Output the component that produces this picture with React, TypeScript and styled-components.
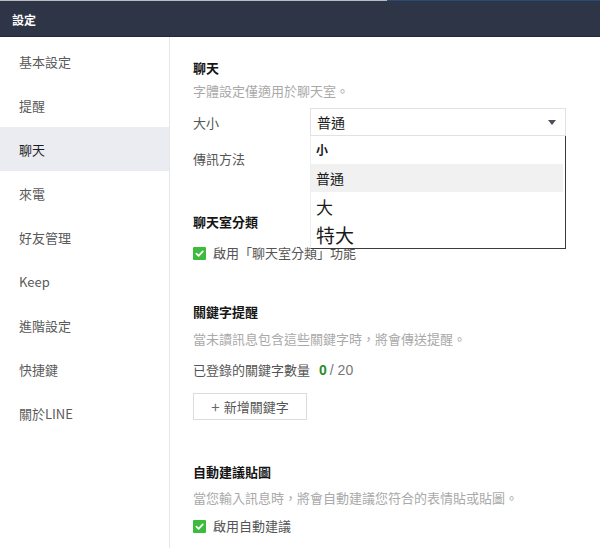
import React from 'react';
import styled, { createGlobalStyle } from 'styled-components';

const GlobalStyle = createGlobalStyle`
    html, body {
        margin: 0;
        padding: 0;
        background: #ffffff;
        font-family: 'Noto Sans CJK TC', 'Noto Sans', 'Liberation Sans', sans-serif;
    }
`;

const menuItems = ['基本設定', '提醒', '聊天', '來電', '好友管理', 'Keep', '進階設定', '快捷鍵', '關於LINE'];

const sizeOptions = [
    { label: '小', size: 12, active: false },
    { label: '普通', size: 14, active: true },
    { label: '大', size: 17, active: false },
    { label: '特大', size: 19, active: false },
];

const Check = () => (
    <CheckBox>
        <svg width="9" height="9" viewBox="0 0 10 10">
            <path d="M1.5 5.2 L4 7.6 L8.6 2.6" fill="none" stroke="#fff" strokeWidth="1.9" strokeLinecap="round" strokeLinejoin="round" />
        </svg>
    </CheckBox>
);

const App = () => {
    return (
        <Page>
            <GlobalStyle />
            <TopEdge>
                <EdgeGray />
                <EdgeBlue />
            </TopEdge>
            <Header>設定</Header>
            <Body>
                <Sidebar>
                    {menuItems.map((item) => (
                        <MenuItem key={item} $active={item === '聊天'}>
                            {item}
                        </MenuItem>
                    ))}
                </Sidebar>

                <Content>
                    <Heading $top={0}>聊天</Heading>
                    <Desc $top={3}>字體設定僅適用於聊天室。</Desc>
                    <FieldRow $top={7}>
                        <FieldLabel>大小</FieldLabel>
                        <SelectWrap>
                            <SelectBox>
                                普通
                                <Arrow />
                            </SelectBox>
                            <OptionList>
                                {sizeOptions.map((o) => (
                                    <OptionItem key={o.label} $active={o.active} $size={o.size}>
                                        {o.label}
                                    </OptionItem>
                                ))}
                            </OptionList>
                        </SelectWrap>
                    </FieldRow>
                    <FieldRow $top={8}>
                        <FieldLabel>傳訊方法</FieldLabel>
                    </FieldRow>

                    <Heading $top={40}>聊天室分類</Heading>
                    <CheckRow $top={13}>
                        <Check />
                        啟用「聊天室分類」功能
                    </CheckRow>

                    <Heading $top={41}>關鍵字提醒</Heading>
                    <Desc $top={7}>當未讀訊息包含這些關鍵字時，將會傳送提醒。</Desc>
                    <CountRow>
                        已登錄的關鍵字數量
                        <CountNum>0</CountNum>
                        <CountTotal>/ 20</CountTotal>
                    </CountRow>
                    <AddButton>
                        <Plus>+</Plus>新增關鍵字
                    </AddButton>

                    <Heading $top={42}>自動建議貼圖</Heading>
                    <Desc $top={6}>當您輸入訊息時，將會自動建議您符合的表情貼或貼圖。</Desc>
                    <CheckRow $top={10}>
                        <Check />
                        啟用自動建議
                    </CheckRow>
                </Content>
            </Body>
        </Page>
    );
};

export default App;

const Page = styled.div`
    width: 600px;
    height: 548px;
    overflow: hidden;
    display: flex;
    flex-direction: column;
`;

const TopEdge = styled.div`
    display: flex;
    height: 1px;
`;

const EdgeGray = styled.div`
    width: 387px;
    background: #b9bcc2;
`;

const EdgeBlue = styled.div`
    flex: 1;
    background: #2b4a78;
`;

const Header = styled.div`
    height: 36px;
    box-sizing: border-box;
    background: #2e3547;
    border-bottom: 1px solid #232939;
    color: #ffffff;
    font-size: 12px;
    font-weight: 700;
    display: flex;
    align-items: center;
    padding: 1px 0 0 12px;
`;

const Body = styled.div`
    flex: 1;
    display: flex;
`;

const Sidebar = styled.div`
    width: 169px;
    border-right: 1px solid #e6e7ea;
    padding-top: 2px;
    display: flex;
    flex-direction: column;
`;

const MenuItem = styled.div<{ $active: boolean }>`
    height: 44px;
    flex-shrink: 0;
    display: flex;
    align-items: center;
    padding-left: 19px;
    font-size: 13px;
    color: ${(p) => (p.$active ? '#1e1e1e' : '#5a5a5a')};
    background: ${(p) => (p.$active ? '#eaecf2' : 'transparent')};
`;

const Content = styled.div`
    flex: 1;
    padding: 21px 0 0 23px;
    display: flex;
    flex-direction: column;
    align-items: flex-start;
`;

const Heading = styled.div<{ $top: number }>`
    margin-top: ${(p) => p.$top}px;
    font-size: 13px;
    line-height: 20px;
    font-weight: 700;
    color: #151515;
`;

const Desc = styled.div<{ $top: number }>`
    margin-top: ${(p) => p.$top}px;
    font-size: 13px;
    line-height: 20px;
    color: #a9a9a9;
`;

const FieldRow = styled.div<{ $top: number }>`
    margin-top: ${(p) => p.$top}px;
    height: 28px;
    display: flex;
    align-items: center;
`;

const FieldLabel = styled.div`
    width: 117px;
    font-size: 13px;
    color: #555555;
`;

const SelectWrap = styled.div`
    position: relative;
`;

const SelectBox = styled.div`
    width: 256px;
    height: 28px;
    box-sizing: border-box;
    border: 1px solid #e2e2e2;
    padding-left: 6px;
    display: flex;
    align-items: center;
    font-size: 14px;
    color: #1a1a1a;
    position: relative;
`;

const Arrow = styled.span`
    position: absolute;
    right: 9px;
    top: 11px;
    width: 0;
    height: 0;
    border-left: 4px solid transparent;
    border-right: 4px solid transparent;
    border-top: 5px solid #4a4f5a;
`;

const OptionList = styled.div`
    position: absolute;
    top: 28px;
    left: 0;
    width: 256px;
    box-sizing: border-box;
    background: #ffffff;
    border-left: 1px solid #eeeeee;
    border-right: 1px solid #3a3a3a;
    border-bottom: 1px solid #3a3a3a;
    padding: 0 2px 0 0;
    z-index: 2;
`;

const OptionItem = styled.div<{ $active: boolean; $size: number }>`
    height: 28px;
    line-height: 1;
    display: flex;
    align-items: center;
    padding-left: 5px;
    font-size: ${(p) => p.$size}px;
    font-weight: ${(p) => (p.$size === 12 ? 700 : 400)};
    color: #1a1a1a;
    background: ${(p) => (p.$active ? '#f1f1f1' : 'transparent')};
`;

const CheckRow = styled.div<{ $top: number }>`
    margin-top: ${(p) => p.$top}px;
    display: flex;
    align-items: center;
    gap: 7px;
    font-size: 13px;
    line-height: 16px;
    color: #555555;
`;

const CheckBox = styled.span`
    width: 13px;
    height: 13px;
    border-radius: 1px;
    background: #3dbb3d;
    display: flex;
    align-items: center;
    justify-content: center;
`;

const CountRow = styled.div`
    margin-top: 11px;
    font-size: 13px;
    line-height: 20px;
    color: #555555;
    display: flex;
    align-items: center;
`;

const CountNum = styled.span`
    margin-left: 9px;
    color: #2e8b2e;
    font-weight: 700;
    font-family: 'Liberation Sans', sans-serif;
    font-size: 14px;
`;

const CountTotal = styled.span`
    margin-left: 3px;
    color: #777777;
    font-family: 'Liberation Sans', sans-serif;
    font-size: 14px;
`;

const AddButton = styled.button`
    margin-top: 13px;
    width: 114px;
    height: 27px;
    border: 1px solid #dcdcdc;
    background: #ffffff;
    color: #555555;
    font-family: 'Noto Sans CJK TC', 'Noto Sans', sans-serif;
    font-size: 13px;
    display: flex;
    align-items: center;
    justify-content: center;
    padding: 0;
`;

const Plus = styled.span`
    font-size: 15px;
    margin-right: 4px;
    color: #666666;
`;
